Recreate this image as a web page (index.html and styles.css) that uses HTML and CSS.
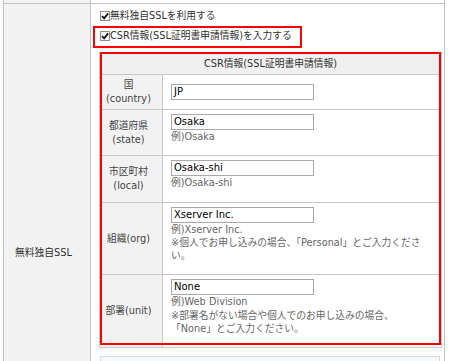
FILE: index.html
```html
<!DOCTYPE html>
<html lang="ja">
<head>
<meta charset="utf-8">
<title>無料独自SSL</title>
<link rel="stylesheet" href="styles.css">
</head>
<body>
<div class="form">
  <div class="row prev"><div class="th"></div><div class="td"></div></div>
  <div class="row">
    <div class="th">無料独自SSL</div>
    <div class="td main">
      <div class="check"><span class="cb"><svg width="10" height="10" viewBox="0 0 10 10"><rect x="0.5" y="0.5" width="9" height="9" fill="#fbfbfb" stroke="#8c8c8c"/><path d="M2 5 L4.1 7.3 L8.2 2.4" fill="none" stroke="#111" stroke-width="1.8"/></svg></span>無料独自SSLを利用する</div>
      <div class="check"><span class="cb"><svg width="10" height="10" viewBox="0 0 10 10"><rect x="0.5" y="0.5" width="9" height="9" fill="#fbfbfb" stroke="#8c8c8c"/><path d="M2 5 L4.1 7.3 L8.2 2.4" fill="none" stroke="#111" stroke-width="1.8"/></svg></span>CSR情報(SSL証明書申請情報)を入力する</div>
      <div class="csr">
        <div class="csr-head">CSR情報(SSL証明書申請情報)</div>
        <div class="csr-row">
          <div class="lab">国<br>(country)</div>
          <div class="val"><div class="inp">JP</div></div>
        </div>
        <div class="csr-row">
          <div class="lab">都道府県<br>(state)</div>
          <div class="val"><div class="inp">Osaka</div><div class="ex">例)Osaka</div></div>
        </div>
        <div class="csr-row">
          <div class="lab">市区町村<br>(local)</div>
          <div class="val"><div class="inp">Osaka-shi</div><div class="ex">例)Osaka-shi</div></div>
        </div>
        <div class="csr-row">
          <div class="lab">組織(org)</div>
          <div class="val"><div class="inp">Xserver Inc.</div><div class="ex">例)Xserver Inc.<br>※個人でお申し込みの場合、「Personal」とご入力ください。</div></div>
        </div>
        <div class="csr-row">
          <div class="lab">部署(unit)</div>
          <div class="val"><div class="inp">None</div><div class="ex">例)Web Division<br>※部署名がない場合や個人でのお申し込みの場合、<br>「None」とご入力ください。</div></div>
        </div>
      </div>
      <div class="notice"></div>
      <div class="mark mark1"></div>
      <div class="mark mark2"></div>
    </div>
  </div>
</div>
</body>
</html>
```

FILE: styles.css
```css
* { box-sizing: border-box; }
html, body { margin: 0; padding: 0; background: #fff; overflow: hidden; }
body {
  font-family: "DejaVu Sans", "Noto Sans CJK JP", sans-serif;
  font-size: 9.75px;
  color: #333;
}
.form {
  margin-left: 3px;
  width: 442px;
  border-left: 1px solid #c3c3c3;
  border-right: 1px solid #c3c3c3;
}
.row {
  display: flex;
  border-top: 1px solid #c3c3c3;
}
.row.prev { height: 3px; border-top: none; }
.th {
  width: 87px;
  flex: none;
  background: #f2f2f2;
  border-right: 1px solid #c3c3c3;
  display: flex;
  align-items: center;
  padding-left: 11px;
  color: #333;
}
.td { flex: 1; }
.main {
  position: relative;
  padding: 2px 2px 8px 8px;
}
.check {
  height: 20px;
  line-height: 20px;
  display: flex;
  align-items: center;
  white-space: nowrap;
}
.cb {
  width: 10px;
  height: 10px;
  margin-left: 1px;
  flex: none;
  display: block;
}
.cb svg { display: block; }
.csr {
  margin-top: 6px;
  width: 343px;
  border: 1px solid #c8c8c8;
}
.csr-head {
  height: 22px;
  line-height: 21px;
  text-align: center;
  background: #f0f0f0;
  border-bottom: 1px solid #c8c8c8;
  color: #333;
}
.csr-row {
  display: flex;
  border-bottom: 1px solid #c8c8c8;
}
.csr-row:last-child { border-bottom: none; }
.lab {
  width: 63px;
  flex: none;
  background: #f2f2f2;
  border-right: 1px solid #c8c8c8;
  display: flex;
  align-items: center;
  justify-content: center;
  text-align: center;
  line-height: 14px;
  padding: 3px 5px 3px 0;
  color: #444;
}
.val {
  flex: 1;
  padding: 4px 8px;
  display: flex;
  flex-direction: column;
  justify-content: center;
}
.inp {
  width: 143px;
  height: 16px;
  border: 1px solid #a9a9a9;
  background: #fff;
  line-height: 14px;
  padding-left: 2px;
  color: #000;
  font-size: 10px;
}
.ex {
  color: #666;
  line-height: 13.3px;
  margin-bottom: 8px;
}
.notice {
  margin-top: 8px;
  margin-left: 1px;
  width: 340px;
  height: 136px;
  border: 1px solid #d3dbe3;
  background: #f5f9fc;
}
.mark {
  position: absolute;
  border: 2px solid #f00;
  pointer-events: none;
}
.mark1 { left: 2px; top: 22px; width: 209px; height: 22px; }
.mark2 { left: 9px; top: 48px; width: 341px; height: 293px; }
```
